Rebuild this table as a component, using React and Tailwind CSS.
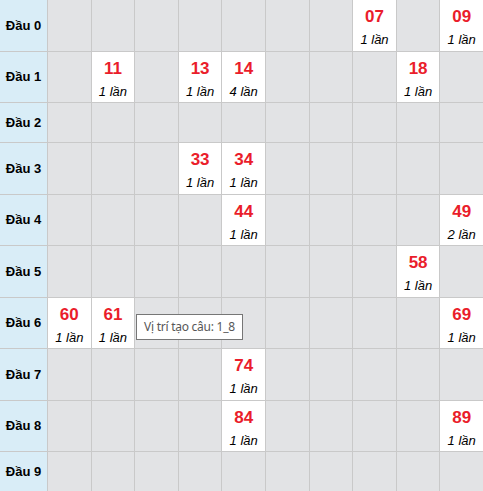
import React from 'react';

// Bảng đầu - số lần về
const rows = [
  { dau: 0, items: { 7: 1, 9: 1 } },
  { dau: 1, items: { 1: 1, 3: 1, 4: 4, 8: 1 } },
  { dau: 2, items: {} },
  { dau: 3, items: { 3: 1, 4: 1 } },
  { dau: 4, items: { 4: 1, 9: 2 } },
  { dau: 5, items: { 8: 1 } },
  { dau: 6, items: { 0: 1, 1: 1, 9: 1 } },
  { dau: 7, items: { 4: 1 } },
  { dau: 8, items: { 4: 1, 9: 1 } },
  { dau: 9, items: {} },
];

const cols = [0, 1, 2, 3, 4, 5, 6, 7, 8, 9];

const App = () => {
  return (
    <div className="relative w-[483px] h-[491px] overflow-hidden bg-white font-['Liberation_Sans',Arial,sans-serif]">
      <div className="grid grid-cols-[47px_repeat(10,minmax(0,1fr))] gap-px bg-[#c9c9c9]">
        {rows.map((row) => {
          const filled = Object.keys(row.items).length > 0;
          return (
            <React.Fragment key={row.dau}>
              <div
                className={`flex items-center justify-center bg-[#d9edf7] text-[13px] font-bold text-black ${
                  filled ? 'h-[50.5px]' : 'h-[39px]'
                }`}
              >
                Đầu {row.dau}
              </div>
              {cols.map((c) => {
                const count = row.items[c];
                if (!count) {
                  return <div key={c} className="bg-[#e2e3e5]"></div>;
                }
                return (
                  <div key={c} className="flex flex-col items-center bg-white pt-[7px]">
                    <span className="text-[17px] leading-[20px] font-bold text-[#ea1d2b]">
                      {row.dau}
                      {c}
                    </span>
                    <span className="mt-[5px] text-[13px] leading-[16px] italic text-black">
                      {count} lần
                    </span>
                  </div>
                );
              })}
            </React.Fragment>
          );
        })}
      </div>

      {/* tooltip */}
      <div className="absolute left-[136px] top-[314px] h-[26px] border border-[#767676] bg-white px-[7px] text-[12px] leading-[24px] tracking-[-0.25px] text-[#575757] font-['Noto_Sans',sans-serif] whitespace-nowrap">
        Vị trí tạo câu: 1_8
      </div>
    </div>
  );
};

export default App;
